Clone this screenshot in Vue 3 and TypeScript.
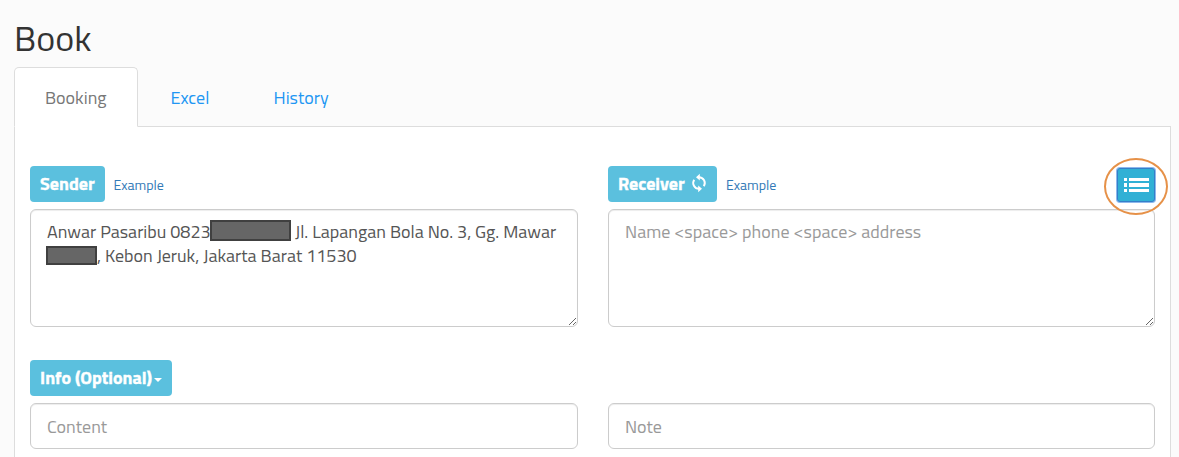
<script setup lang="ts">
import { ref } from 'vue'

const tabs = ['Booking', 'Excel', 'History']
const active = ref('Booking')
const receiver = ref('')
const content = ref('')
const note = ref('')
</script>

<template>
  <main class="page">
    <h1>Book</h1>
    <nav class="tabs">
      <a
        v-for="tab in tabs"
        :key="tab"
        class="tab"
        :class="[tab.toLowerCase(), { active: tab === active }]"
        @click="active = tab"
      ><span>{{ tab }}</span></a>
    </nav>
    <section class="panel">
      <div class="column">
        <div class="heading">
          <button class="btn sender">Sender</button>
          <a class="example">Example</a>
        </div>
        <div class="field area" contenteditable="true" spellcheck="false">
          <div class="line"><span class="t1">Anwar Pasaribu 0823</span><i class="mask phone"></i><span class="t2">Jl. Lapangan Bola No. 3, Gg. Mawar</span></div>
          <div class="line"><i class="mask number"></i><span class="t3">, Kebon Jeruk, Jakarta Barat 11530</span></div>
        </div>
      </div>
      <div class="column">
        <div class="heading">
          <button class="btn receiver">
            <span>Receiver</span>
            <svg class="sync" viewBox="0 0 16 20">
              <path d="M7 4.2H8A5.8 5.8 0 0 1 12.8 13.2M9 15.8H8A5.8 5.8 0 0 1 3.2 6.8" fill="none" stroke="#fff" stroke-width="1.9" />
              <path d="M8.8 .8V7.6L5 4.2ZM7.2 12.4V19.2L11 15.8Z" fill="#fff" />
            </svg>
          </button>
          <a class="example">Example</a>
          <button class="list-btn" aria-label="List">
            <svg viewBox="0 0 25 14" shape-rendering="crispEdges">
              <path d="M0 0h3v3H0zM5 0h20v3H5zM0 5h3v4H0zM5 5h20v4H5zM0 11h3v3H0zM5 11h20v3H5z" fill="#fff" />
            </svg>
            <span class="ring"></span>
          </button>
        </div>
        <textarea v-model="receiver" class="field area" placeholder="Name &lt;space&gt; phone &lt;space&gt; address"></textarea>
      </div>
      <div class="column">
        <div class="heading">
          <button class="btn info"><span>Info (Optional)</span><i class="caret"></i></button>
        </div>
        <input v-model="content" class="field content" placeholder="Content">
      </div>
      <div class="column end">
        <input v-model="note" class="field note" placeholder="Note">
      </div>
    </section>
  </main>
</template>

<style>
html, body { background: #fbfbfb; overflow: hidden; }
</style>

<style scoped>
* { box-sizing: border-box; }
.page {
  height: 457px;
  overflow: hidden;
  padding: 0 8px 0 14px;
  font: 400 18px/24px "Titillium Web", Roboto, sans-serif;
  color: #555;
}
h1 { margin: 0; padding-top: 18px; height: 67px; font-size: 36px; font-weight: 400; line-height: 40px; color: #333; }
.tabs { display: flex; height: 60px; border-bottom: 1px solid #ddd; }
.tab {
  height: 60px;
  padding: 18px 29px 0 30px;
  border: 1px solid transparent;
  border-radius: 5px 5px 0 0;
  color: #2196f3;
  cursor: pointer;
  white-space: nowrap;
}
.tab.active { width: 124px; background: #fff; border-color: #ddd; border-bottom-color: #fff; color: #777; }
.tab.excel { width: 101px; margin-left: 2px; padding-left: 29.5px; }
.tab.history { margin-left: 2px; padding-left: 29.5px; }
.panel {
  display: grid;
  grid-template-columns: 548px 547px;
  grid-template-rows: 161px 89px;
  gap: 33px 30px;
  height: 360px;
  padding: 39px 15px 0;
  background: #fff;
  border: solid #ddd;
  border-width: 0 1px;
}
.column { display: flex; flex-direction: column; }
.end { justify-content: flex-end; }
.heading { display: flex; height: 43px; align-items: flex-start; }
.btn {
  display: flex;
  align-items: center;
  height: 36px;
  padding: 0 10px;
  border: 0;
  border-radius: 4px;
  background: #5bc0de;
  color: #fff;
  font: 700 18px/36px "Titillium Web", Roboto, sans-serif;
  -webkit-text-stroke: .35px #fff;
  white-space: nowrap;
}
.sender { width: 75px; }
.receiver { width: 109px; }
.info { width: 142px; }
.sync { width: 16px; height: 20px; margin: -2px 0 0 6px; flex: none; }
.caret { margin: 4px 0 0 2px; border: solid transparent; border-width: 4px 4px 0; border-top-color: #fff; }
.example { margin: 7px 0 0 9px; color: #337ab7; font-size: 14px; line-height: 24px; cursor: pointer; }
.sender + .example { margin-left: 8.5px; }
.list-btn {
  position: relative;
  width: 38px;
  height: 34px;
  margin: 2px 0 0 auto;
  padding: 0;
  border: 1px solid #347fc9;
  border-radius: 3px;
  background: #31b0d5;
  box-shadow: 0 0 0 1px #8db8ec;
}
.list-btn svg { display: block; width: 25px; height: 14px; margin: -1px 0 0 6px; }
.ring {
  position: absolute;
  left: -14px;
  top: -11px;
  width: 64px;
  height: 57px;
  border: 2px solid #e69148;
  border-radius: 50%;
  z-index: 2;
  pointer-events: none;
}
.field {
  display: block;
  width: 100%;
  margin: 0;
  padding: 10px 16px;
  border: 1px solid #ccc;
  border-radius: 6px;
  background: #fff;
  box-shadow: inset 0 1px 1px rgba(0, 0, 0, .075);
  outline: 0;
  color: #555;
  font: inherit;
}
.field::placeholder { color: #999; opacity: 1; }
.area { height: 118px; resize: both; overflow: auto; }
.content, .note { height: 46px; }
.line { display: flex; height: 24px; white-space: pre; }
.mask { flex: none; background: #666; border: 2px solid #404040; }
.t1 { width: 163px; }
.phone { width: 81px; height: 21px; margin-right: 4px; }
.number { width: 51px; height: 19px; margin: 2px 0 0 -1px; }
</style>
